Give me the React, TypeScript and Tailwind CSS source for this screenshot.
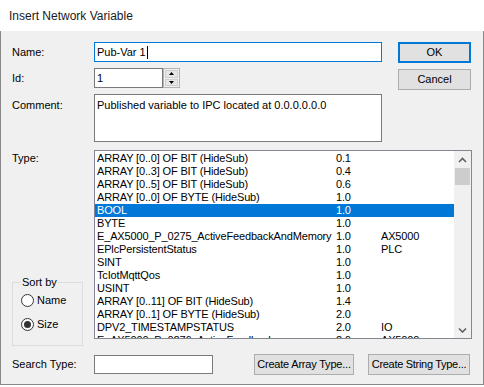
import React from 'react';

const rows: [string, string, string][] = [
  ['ARRAY [0..0] OF BIT (HideSub)', '0.1', ''],
  ['ARRAY [0..3] OF BIT (HideSub)', '0.4', ''],
  ['ARRAY [0..5] OF BIT (HideSub)', '0.6', ''],
  ['ARRAY [0..0] OF BYTE (HideSub)', '1.0', ''],
  ['BOOL', '1.0', ''],
  ['BYTE', '1.0', ''],
  ['E_AX5000_P_0275_ActiveFeedbackAndMemory', '1.0', 'AX5000'],
  ['EPlcPersistentStatus', '1.0', 'PLC'],
  ['SINT', '1.0', ''],
  ['TcIotMqttQos', '1.0', ''],
  ['USINT', '1.0', ''],
  ['ARRAY [0..11] OF BIT (HideSub)', '1.4', ''],
  ['ARRAY [0..1] OF BYTE (HideSub)', '2.0', ''],
  ['DPV2_TIMESTAMPSTATUS', '2.0', 'IO'],
  ['E_AX5000_P_0276_ActiveFeedback', '2.0', 'AX5000'],
];

const Chevron = ({ down }: { down?: boolean }) => (
  <svg width="9" height="6" viewBox="0 0 9 6">
    <path
      d={down ? 'M1 1.5 L4.5 5 L8 1.5' : 'M1 5 L4.5 1.5 L8 5'}
      fill="none"
      stroke="#606060"
      strokeWidth="1.6"
    />
  </svg>
);

const Radio = ({ label, checked }: { label: string; checked?: boolean }) => (
  <div className="flex items-center h-[16px] gap-[3px]">
    <div className="w-[13px] h-[13px] rounded-full border border-[#333] bg-white flex items-center justify-center">
      {checked && <div className="w-[7px] h-[7px] rounded-full bg-[#333]" />}
    </div>
    <span className="leading-[13px]">{label}</span>
  </div>
);

const Button = ({ children, w, primary }: { children: React.ReactNode; w: string; primary?: boolean }) => (
  <div
    className={`${w} h-[21px] bg-[#e1e1e1] flex items-center justify-center whitespace-nowrap ${
      primary ? 'border-2 border-[#0078d7]' : 'border border-[#adadad]'
    }`}
  >
    {children}
  </div>
);

export default function App() {
  return (
    <div className="w-[484px] h-[387px] bg-white font-['Liberation_Sans',Arial,sans-serif] text-[11px] text-black overflow-hidden">
      <div className="h-[31px] flex items-center pl-[9px] text-[12px] text-[#1a1a1a]">Insert Network Variable</div>

      <div className="h-[354px] bg-[#f0f0f0] border-x border-b border-[#8a8a8a] pl-[11px] pt-[11px] flex flex-col">
        {/* top fields + buttons */}
        <div className="flex">
          <div className="flex flex-col w-[370px]">
            <div className="flex items-center h-[20px]">
              <span className="w-[82px]">Name:</span>
              <div className="w-[288px] h-[20px] border border-[#0078d7] bg-white flex items-center pl-[2px]">
                Pub-Var 1<span className="w-[1px] h-[13px] bg-black ml-[1px]" />
              </div>
            </div>
            <div className="flex items-center h-[20px] mt-[6px]">
              <span className="w-[82px]">Id:</span>
              <div className="w-[69px] h-[20px] border border-[#7a7a7a] bg-white flex items-center pl-[2px]">1</div>
              <div className="w-[17px] h-[20px] border border-[#b4b4b4] bg-[#f0f0f0] flex flex-col p-[1px] gap-[1px]">
                <div className="flex-1 bg-[#e6e6e6] border border-[#cfcfcf] flex items-center justify-center">
                  <svg width="5" height="3" viewBox="0 0 5 3"><path d="M0 3 L2.5 0 L5 3 Z" fill="#000" /></svg>
                </div>
                <div className="flex-1 bg-[#e6e6e6] border border-[#cfcfcf] flex items-center justify-center">
                  <svg width="5" height="3" viewBox="0 0 5 3"><path d="M0 0 L2.5 3 L5 0 Z" fill="#000" /></svg>
                </div>
              </div>
            </div>
            <div className="flex mt-[6px]">
              <span className="w-[82px] pt-[3px]">Comment:</span>
              <div className="w-[288px] h-[48px] border border-[#7a7a7a] bg-white px-[2px] pt-[2px]">
                Published variable to IPC located at 0.0.0.0.0.0
              </div>
            </div>
          </div>
          <div className="ml-[16px] flex flex-col gap-[6px]">
            <Button w="w-[73px]" primary>OK</Button>
            <Button w="w-[73px]">Cancel</Button>
          </div>
        </div>

        {/* type list */}
        <div className="flex mt-[8px] h-[189px]">
          <div className="w-[82px] flex flex-col">
            <span className="pt-[2px] leading-[13px]">Type:</span>
            <div className="mt-[117px] w-[71px] h-[64px] shrink-0 border border-[#dcdcdc] pl-[8px] flex flex-col">
              <span className="-mt-[7px] w-fit bg-[#f0f0f0] px-[1px] leading-[13px]">Sort by</span>
              <div className="mt-[3px] flex flex-col gap-[8px]">
                <Radio label="Name" />
                <Radio label="Size" checked />
              </div>
            </div>
          </div>
          <div className="w-[378px] h-[189px] border border-[#828790] bg-white flex">
            <div className="flex-1 pt-[1px] overflow-hidden tracking-[-0.15px]">
              {rows.map(([name, size, cat], i) => (
                <div
                  key={i}
                  className={`flex h-[13px] leading-[13px] pl-[2px] whitespace-nowrap ${
                    i === 4 ? 'bg-[#0078d7] text-white' : ''
                  }`}
                >
                  <span className="w-[239px] shrink-0 overflow-hidden">{name}</span>
                  <span className="w-[45px] shrink-0">{size}</span>
                  <span>{cat}</span>
                </div>
              ))}
            </div>
            <div className="w-[17px] bg-[#f0f0f0] flex flex-col">
              <div className="h-[17px] flex items-center justify-center">
                <Chevron />
              </div>
              <div className="h-[17px] mx-[1px] bg-[#cdcdcd]" />
              <div className="flex-1" />
              <div className="h-[17px] flex items-center justify-center">
                <Chevron down />
              </div>
            </div>
          </div>
        </div>

        {/* bottom row */}
        <div className="flex items-center mt-[15px] h-[20px]">
          <span className="w-[82px]">Search Type:</span>
          <div className="w-[119px] h-[19px] border border-[#7a7a7a] bg-white" />
          <div className="ml-[41px]">
            <Button w="w-[100px] tracking-[-0.2px]">Create Array Type...</Button>
          </div>
          <div className="ml-[14px]">
            <Button w="w-[102px] tracking-[-0.3px]">Create String Type...</Button>
          </div>
        </div>
      </div>
    </div>
  );
}
